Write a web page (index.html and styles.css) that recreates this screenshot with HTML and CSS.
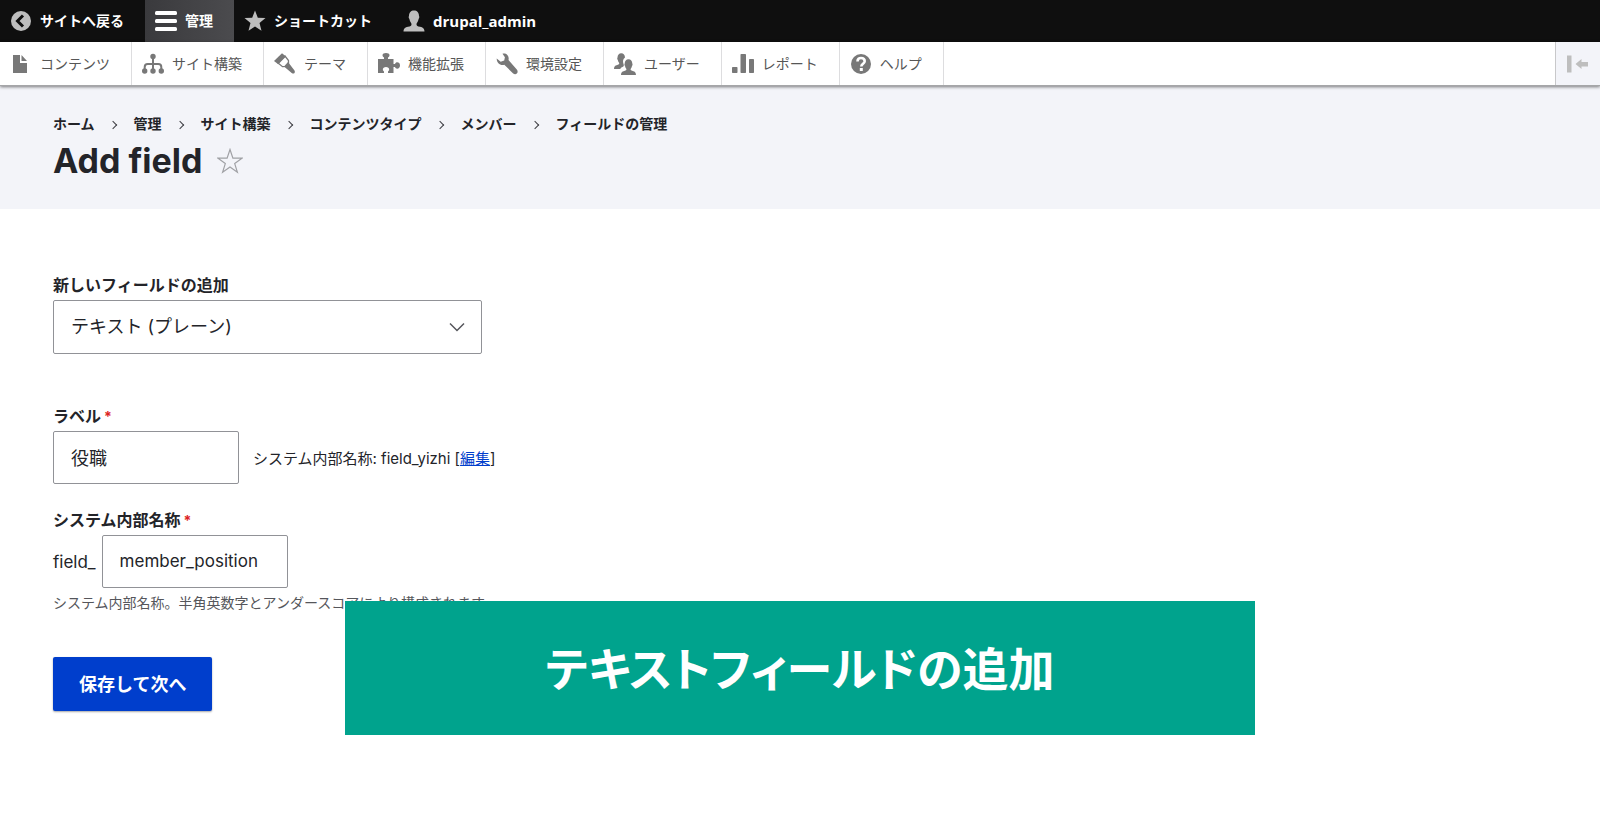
FILE: index.html
```html
<!DOCTYPE html>
<html lang="ja">
<head>
<meta charset="utf-8">
<title>Add field</title>
<link rel="stylesheet" href="styles.css">
</head>
<body>
<nav class="bar" aria-label="管理ツールバー">
  <a class="tab" href="#"><svg class="icon" viewBox="0 0 22 22"><circle cx="11" cy="11" r="10" fill="#bebebe"/><path d="M13 5.500 7.500 11l5.500 5.500" fill="none" stroke="#0f0f0f" stroke-width="3"/></svg><span>サイトへ戻る</span></a>
  <a class="tab tab-active" href="#"><svg class="icon" viewBox="0 0 22 22" fill="#fff"><rect y="1" width="22" height="4" rx="1.500"/><rect y="9" width="22" height="4" rx="1.500"/><rect y="17" width="22" height="4" rx="1.500"/></svg><span>管理</span></a>
  <a class="tab" href="#"><svg class="icon" viewBox="0 0 22 22" fill="#bebebe"><path d="m11 .5 2.800 7.200 7.700.4-6 4.900 2 7.800-6.500-4.300-6.500 4.300 2-7.800-6-4.900 7.700-.4z"/></svg><span>ショートカット</span></a>
  <a class="tab tab-user" href="#"><svg class="icon" viewBox="0 0 22 22" fill="#bebebe"><path d="M.5 21.500c.3-3.200 1.500-3.900 4.500-4.700 2.400-.7 3.500-1.200 3.500-2.400 0-1-.7-1.500-1.300-2.800-.5-1-.5-1.700-.8-2.600-1-1.200-.8-2.300-.4-3C6 2.500 8 .5 11 .5s5 2 5 5.500c.4.700.6 1.800-.4 3-.3.900-.3 1.600-.8 2.600-.6 1.300-1.300 1.800-1.300 2.800 0 1.200 1.100 1.700 3.500 2.400 3 .8 4.200 1.500 4.500 4.700z"/></svg><span>drupal_admin</span></a>
</nav>
<nav class="tray" aria-label="管理メニュー">
  <a class="item" href="#"><svg class="icon" viewBox="0 0 22 22"><path d="M3 2h7v8h7v10H3zM11.500 2 17 8h-5.500z"/></svg><span>コンテンツ</span></a>
  <a class="item" href="#"><svg class="icon" viewBox="0 0 22 22"><circle cx="11" cy="3.500" r="2.700"/><circle cx="2.700" cy="18" r="2.700"/><circle cx="11" cy="18" r="2.700"/><circle cx="19.300" cy="18" r="2.700"/><path d="M11 4v14M2.700 18v-4q0-3 3-3h10.600q3 0 3 3v4" fill="none" stroke="#787878" stroke-width="2"/></svg><span>サイト構築</span></a>
  <a class="item" href="#"><svg class="icon" viewBox="0 0 22 22"><path d="M0 8 8 .3l4 3.200-7.700 7.800z"/><path d="m4 10 7-7 3.500 4.500v3.500l-2 2.300-4 .4z" fill="none" stroke="#787878" stroke-width="1.300"/><path d="m10 13.500 4-4.500 6.500 8.500q1 1.800-.2 2.700-1.100.9-2.600-.3z"/></svg><span>テーマ</span></a>
  <a class="item" href="#"><svg class="icon" viewBox="0 0 22 22"><path d="M0 6h6V4.500C5 4 4.500 3 4.500 2 4.500.8 6 0 8 0s3.500.8 3.500 2c0 1-.5 2-1.500 2.500V6h5.500v5H17c.4-1.200 1.200-1.700 2.200-1.700 1.600 0 2.800 1.200 2.800 3.200s-1.200 3.200-2.800 3.200c-1 0-1.800-.5-2.200-1.700h-1.500v6H10v-1.500c.8-.6 1.200-1.300 1.200-2.200 0-1.300-1.300-2.300-3.200-2.300s-3.200 1-3.200 2.300c0 .9.4 1.600 1.200 2.200V20H0z"/></svg><span>機能拡張</span></a>
  <a class="item" href="#"><svg class="icon" viewBox="0 0 22 22"><path d="M6.500.7c4-.9 7 2.300 6 6.300l8.300 9.500c1.200 1.500 1 3.200 0 4.100-1 .9-2.600.9-3.900-.4L8.300 11.800C4.300 13.200.5 9.500.7 5.400l4 3.300 3.500-1.100.7-3.400z"/></svg><span>環境設定</span></a>
  <a class="item" href="#"><svg class="icon" viewBox="0 0 22 22"><path d="M0 16c.2-3 1-3.500 3.300-4.100C5 11.400 5.300 11 5.200 10 4.300 9 4 8 3.800 7 3 5.800 3.200 5 3.500 4.500 3.600 2 5 .3 7.200.3c2.500 0 3.700 1.700 3.800 4.200C9 6 8.500 8 9.500 11c.6 1.500.5 2.300-1 3-1 .4-1.800 1-2.200 2z"/><path d="M7 22c.2-3 1-3.500 3.300-4.100 1.700-.5 2.200-.9 2.100-1.900-.9-1-1.200-2-1.400-3-.8-1.200-.6-2-.3-2.500.1-2.500 1.500-4.200 3.800-4.200s3.700 1.700 3.800 4.200c.3.500.5 1.300-.3 2.500-.2 1-.5 2-1.400 3-.1 1 .4 1.400 2.100 1.900 2.300.6 3.100 1.100 3.300 4.100z"/></svg><span>ユーザー</span></a>
  <a class="item" href="#"><svg class="icon" viewBox="0 0 22 22"><rect y="14" width="5.500" height="6" rx=".7"/><rect x="8.500" y="1" width="5.500" height="19" rx=".7"/><rect x="17" y="6" width="5" height="14" rx=".7"/></svg><span>レポート</span></a>
  <a class="item" href="#"><svg class="icon" viewBox="0 0 22 22"><circle cx="11" cy="11" r="10"/><path d="M7.500 8.500C7.500 6 9 5 11 5s3.700 1.200 3.700 3.200c0 2.500-3.400 2.600-3.400 5.300" fill="none" stroke="#fff" stroke-width="2.600"/><rect x="9.800" y="15" width="3" height="3" fill="#fff"/></svg><span>ヘルプ</span></a>
  <button class="toggle" type="button" aria-label="縦向き"><svg class="icon" viewBox="0 0 22 22" fill="#bebebe"><path d="M0 2.500h4.500v17H0zM8.500 11l6-5v3H21v4.500h-6.500V16z"/></svg></button>
</nav>
<header class="header">
  <ol class="crumbs">
    <li><a href="#">ホーム</a></li>
    <li><a href="#">管理</a></li>
    <li><a href="#">サイト構築</a></li>
    <li><a href="#">コンテンツタイプ</a></li>
    <li><a href="#">メンバー</a></li>
    <li><a href="#">フィールドの管理</a></li>
  </ol>
  <div class="heading">
    <h1>Add field</h1>
    <button class="star" type="button" aria-label="ショートカットに追加"><svg viewBox="0 0 26 26"><path d="m13 1.500 2.900 8.700h9.100l-7.300 5.400 2.700 8.700-7.400-5.300-7.400 5.300 2.700-8.700L1 10.200h9.100z" fill="none" stroke="#a0a1a5" stroke-width="1.200"/></svg></button>
  </div>
</header>
<main class="main">
  <form>
    <div class="field field-type">
      <label for="type">新しいフィールドの追加</label>
      <div class="select"><select id="type"><option>テキスト (プレーン)</option></select><svg viewBox="0 0 16 10"><path d="m1 1.500 7 7 7-7" fill="none" stroke="#55565b" stroke-width="1.500"/></svg></div>
    </div>
    <div class="field">
      <label for="label">ラベル<span class="req">*</span></label>
      <div class="row row-wide"><input id="label" type="text" value="役職"><span class="suffix">システム内部名称: field_yizhi [<a href="#">編集</a>]</span></div>
    </div>
    <div class="field">
      <label for="machine">システム内部名称<span class="req">*</span></label>
      <div class="row"><span class="prefix">field_</span><input class="machine" id="machine" type="text" value="member_position"></div>
      <p class="help">システム内部名称。半角英数字とアンダースコアにより構成されます。</p>
    </div>
    <button class="submit" type="button">保存して次へ</button>
  </form>
</main>
<div class="caption">テキストフィールドの追加</div>
</body>
</html>
```
FILE: styles.css
```css
* { box-sizing: border-box; }
body {
  margin: 0;
  min-height: 100vh;
  background: #fff;
  color: #232429;
  font-family: Inter, "Noto Sans CJK JP", sans-serif;
  font-size: 16px;
}
a { color: inherit; text-decoration: none; }
button, input, select { font: inherit; color: inherit; }
.icon { flex: none; width: 22px; height: 22px; }

.bar {
  display: flex;
  height: 42px;
  background: #0f0f0f;
  color: #fff;
  font: bold 14px/20px "Open Sans", "Noto Sans CJK JP", sans-serif;
}
.tab {
  display: flex;
  align-items: center;
  gap: 8px;
  padding: 0 21px 0 10px;
}
.tab-active { background: linear-gradient(90deg, #3a3a3d, #4b4b4e); }
.tab-user { font-size: 15px; }

.tray {
  position: relative;
  display: flex;
  height: 44px;
  background: #fff;
  border-bottom: 1px solid #a5a6a8;
  box-shadow: 0 1px 3px rgba(0, 0, 0, .5);
  color: #565656;
  font: 14px/20px "Noto Sans CJK JP", sans-serif;
}
.item {
  display: flex;
  align-items: center;
  gap: 8px;
  padding: 0 21px 0 10px;
  border-right: 1px solid #dddddf;
  fill: #787878;
}
.item span { padding-bottom: 2px; }
.toggle {
  display: flex;
  align-items: center;
  justify-content: center;
  width: 45px;
  margin-left: auto;
  padding: 0;
  border: 0;
  border-left: 1px solid #c8c8ca;
  background: #f3f4f9;
}

.header {
  padding: 27px 53px 26px;
  background: #f3f4f9;
}
.crumbs {
  display: flex;
  margin: 0;
  padding: 0;
  list-style: none;
  font-size: 14px;
  font-weight: bold;
  line-height: 22px;
}
.crumbs li { display: flex; align-items: center; }
.crumbs li + li::before {
  content: "";
  width: 5px;
  height: 5px;
  margin: 2px 18px 0 15px;
  border: solid #3c3d42;
  border-width: 1px 1px 0 0;
  rotate: 45deg;
}
.heading {
  display: flex;
  align-items: center;
  gap: 15px;
  margin-top: 3px;
}
h1 {
  margin: 0;
  font-size: 34px;
  line-height: 45px;
}
.star { padding: 0; border: 0; background: none; }
.star svg { display: block; width: 26px; height: 26px; }

.main { padding: 64px 53px; }
.field { margin-bottom: 24px; }
.field-type { margin-bottom: 50px; }
.field label {
  display: block;
  font-weight: bold;
  line-height: 24px;
  margin-bottom: 3px;
}
.req {
  margin-left: 3px;
  color: #dc2323;
  font-size: 14px;
  line-height: 1;
}
input, select {
  height: 53px;
  padding: 0 17px 1px;
  border: 1px solid #919297;
  border-radius: 2px;
  background: #fff;
  font-size: 18px;
}
input { width: 186px; }
.machine { font-size: 17px; }
.select {
  display: grid;
  align-items: center;
  width: 429px;
}
.select select {
  grid-area: 1 / 1;
  width: 100%;
  height: 54px;
  padding-bottom: 2px;
  appearance: none;
}
.select svg {
  grid-area: 1 / 1;
  justify-self: end;
  width: 16px;
  height: 10px;
  margin-right: 17px;
  pointer-events: none;
}
.row { display: flex; align-items: center; gap: 6px; }
.row-wide { gap: 14px; }
.prefix { font-size: 17px; }
.suffix { font-size: 15px; }
.suffix a { color: #003ecc; text-decoration: underline; }
.help {
  margin: 4px 0 0;
  color: #55565b;
  font-size: 14px;
  line-height: 22px;
}
.submit {
  height: 54px;
  margin-top: 19px;
  padding: 0 26px 3px;
  border: 0;
  border-radius: 2px;
  background: #003ecc;
  box-shadow: 0 1px 2px rgba(0, 0, 0, .35);
  color: #fff;
  font-size: 18px;
  font-weight: bold;
}

.caption {
  position: fixed;
  right: 345px;
  bottom: 99px;
  left: 345px;
  padding: 28px 0 32px;
  background: #00a38d;
  color: #fff;
  font: bold 46px/74px "Noto Sans CJK JP", sans-serif;
  font-feature-settings: "palt";
  text-align: center;
}
```
